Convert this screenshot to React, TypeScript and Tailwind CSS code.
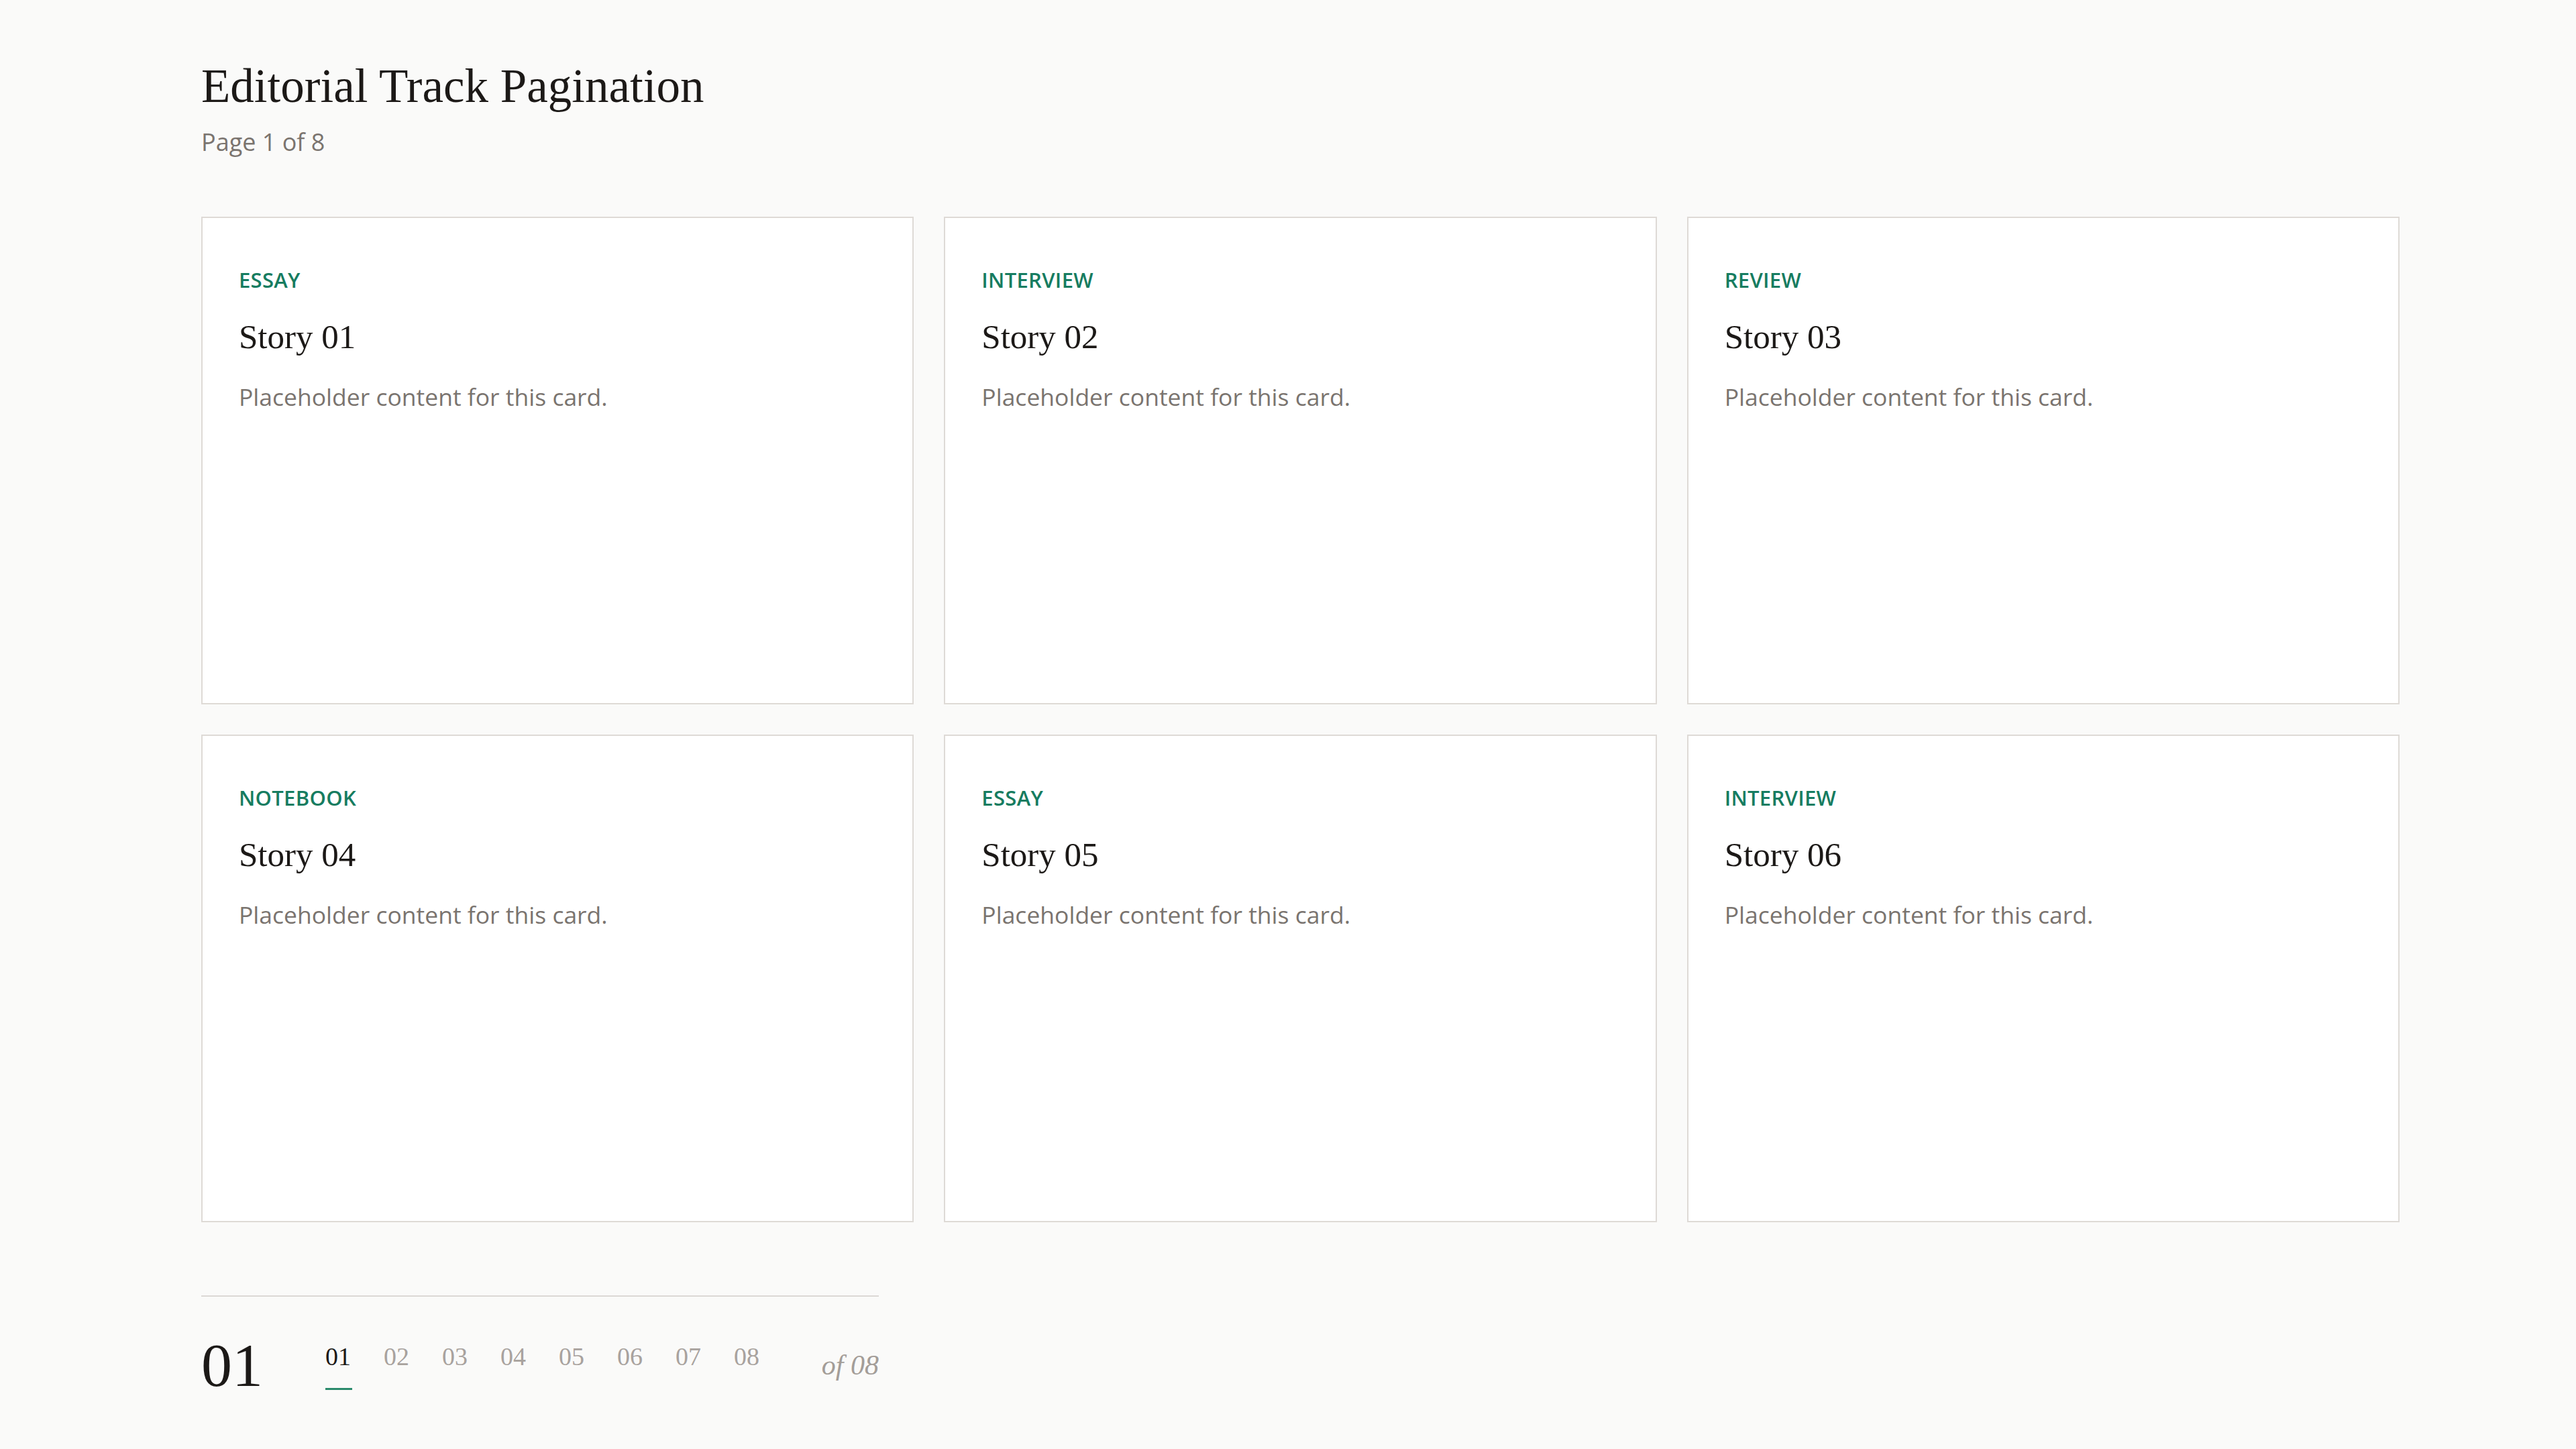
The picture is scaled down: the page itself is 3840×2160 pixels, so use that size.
import React from 'react';

const stories = [
  { tag: 'Essay', title: 'Story 01' },
  { tag: 'Interview', title: 'Story 02' },
  { tag: 'Review', title: 'Story 03' },
  { tag: 'Notebook', title: 'Story 04' },
  { tag: 'Essay', title: 'Story 05' },
  { tag: 'Interview', title: 'Story 06' },
];

const pages = ['01', '02', '03', '04', '05', '06', '07', '08'];

const serif = "font-['Liberation_Serif',serif]";
const sans = "font-['Open_Sans',sans-serif]";

const StoryCard = ({ tag, title }: { tag: string; title: string }) => (
  <article className="h-[727px] border-2 border-[#dedad6] bg-white px-[54px] pt-[69px]">
    <p className={`${sans} text-[31px] leading-[46px] font-semibold uppercase tracking-[0.01em] text-[#167c60]`}>
      {tag}
    </p>
    <h2 className={`${serif} mt-[32px] text-[51px] leading-[61px] font-normal text-[#1c1917]`}>
      {title}
    </h2>
    <p className={`${sans} mt-[32px] text-[35.5px] leading-[52px] text-[#7a746f]`}>
      Placeholder content for this card.
    </p>
  </article>
);

const App = () => {
  const current = 0;

  return (
    <div className="min-h-screen w-full bg-[#fafaf9] pl-[300px] pt-[86px]">
      <div className="w-[3277px]">
        {/* Header */}
        <h1 className={`${serif} text-[71px] leading-[84px] font-normal text-[#1c1917]`}>
          Editorial Track Pagination
        </h1>
        <p className={`${sans} mt-[16px] text-[36px] leading-[52px] text-[#7a746f]`}>Page 1 of 8</p>

        {/* Story grid */}
        <div className="mt-[85px] grid grid-cols-3 gap-[45px]">
          {stories.map((s) => (
            <StoryCard key={s.title} tag={s.tag} title={s.title} />
          ))}
        </div>

        {/* Track pagination */}
        <nav className="mt-[109px] flex w-[1010px] items-center border-t-2 border-[#dbd8d5] pt-[56px]">
          <span className={`${serif} w-[95px] text-[92px] leading-[92px] text-[#1c1917]`}>01</span>
          <div className="ml-[90px] flex items-center gap-[47px]">
            {pages.map((p, i) => (
              <button key={p} className="flex flex-col items-start">
                <span
                  className={`${serif} text-[38px] leading-[46px] ${
                    i === current ? 'text-[#1c1917]' : 'text-[#a8a29e]'
                  }`}
                >
                  {p}
                </span>
                <span
                  className={`mt-[24px] h-[3px] w-[40px] ${i === current ? 'bg-[#2a8a6c]' : 'bg-transparent'}`}
                />
              </button>
            ))}
          </div>
          <span className={`${serif} ml-auto text-[42px] leading-[46px] italic text-[#a39d98]`}>of 08</span>
        </nav>
      </div>
    </div>
  );
};

export default App;
